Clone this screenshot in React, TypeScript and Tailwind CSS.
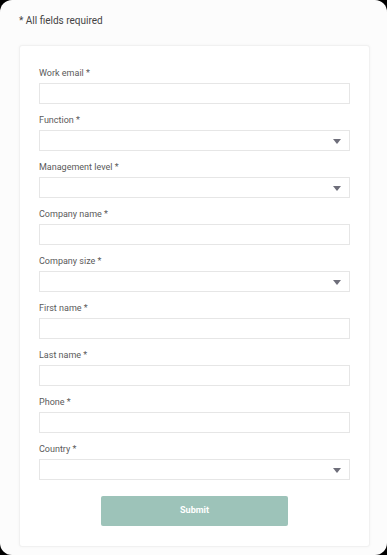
import React from 'react';

const FIELDS: { label: string; select?: boolean }[] = [
  { label: 'Work email *' },
  { label: 'Function *', select: true },
  { label: 'Management level *', select: true },
  { label: 'Company name *' },
  { label: 'Company size *', select: true },
  { label: 'First name *' },
  { label: 'Last name *' },
  { label: 'Phone *' },
  { label: 'Country *', select: true },
];

function Field({ label, select }: { label: string; select?: boolean }) {
  return (
    <div className="flex flex-col mb-[10px]">
      <label className="h-[12px] text-[9px] leading-[12px] text-[#5a5a5a]">{label}</label>
      <div className="mt-[4px] h-[21px] w-full border border-[#e6e6e6] bg-white relative">
        {select && (
          <svg className="absolute right-[8px] top-[8px]" width="8" height="5" viewBox="0 0 8 5">
            <path d="M0 0 H8 L4 5 Z" fill="#6e6e7a" />
          </svg>
        )}
      </div>
    </div>
  );
}

export default function App() {
  return (
    <div className="bg-black w-[387px] h-[555px]" style={{ fontFamily: 'Roboto, "Noto Sans", sans-serif' }}>
      <div className="h-full rounded-[12px] bg-[#fcfcfc] pt-[15px] px-[19px] pr-[17px]">
        <p className="text-[10px] leading-[12px] text-[#444]">* All fields required</p>
        <div className="mt-[18px] bg-white border border-[#f1f1f1] rounded-[3px] shadow-[0_0_3px_rgba(0,0,0,0.04)] pt-[21px] pb-[20px] px-[19px]">
          {FIELDS.map((f) => (
            <Field key={f.label} label={f.label} select={f.select} />
          ))}
          <div className="flex justify-center mt-[16px]">
            <button className="w-[187px] h-[30px] rounded-[2px] bg-[#9dc3b9] text-white text-[9px] font-bold">
              Submit
            </button>
          </div>
        </div>
      </div>
    </div>
  );
}
